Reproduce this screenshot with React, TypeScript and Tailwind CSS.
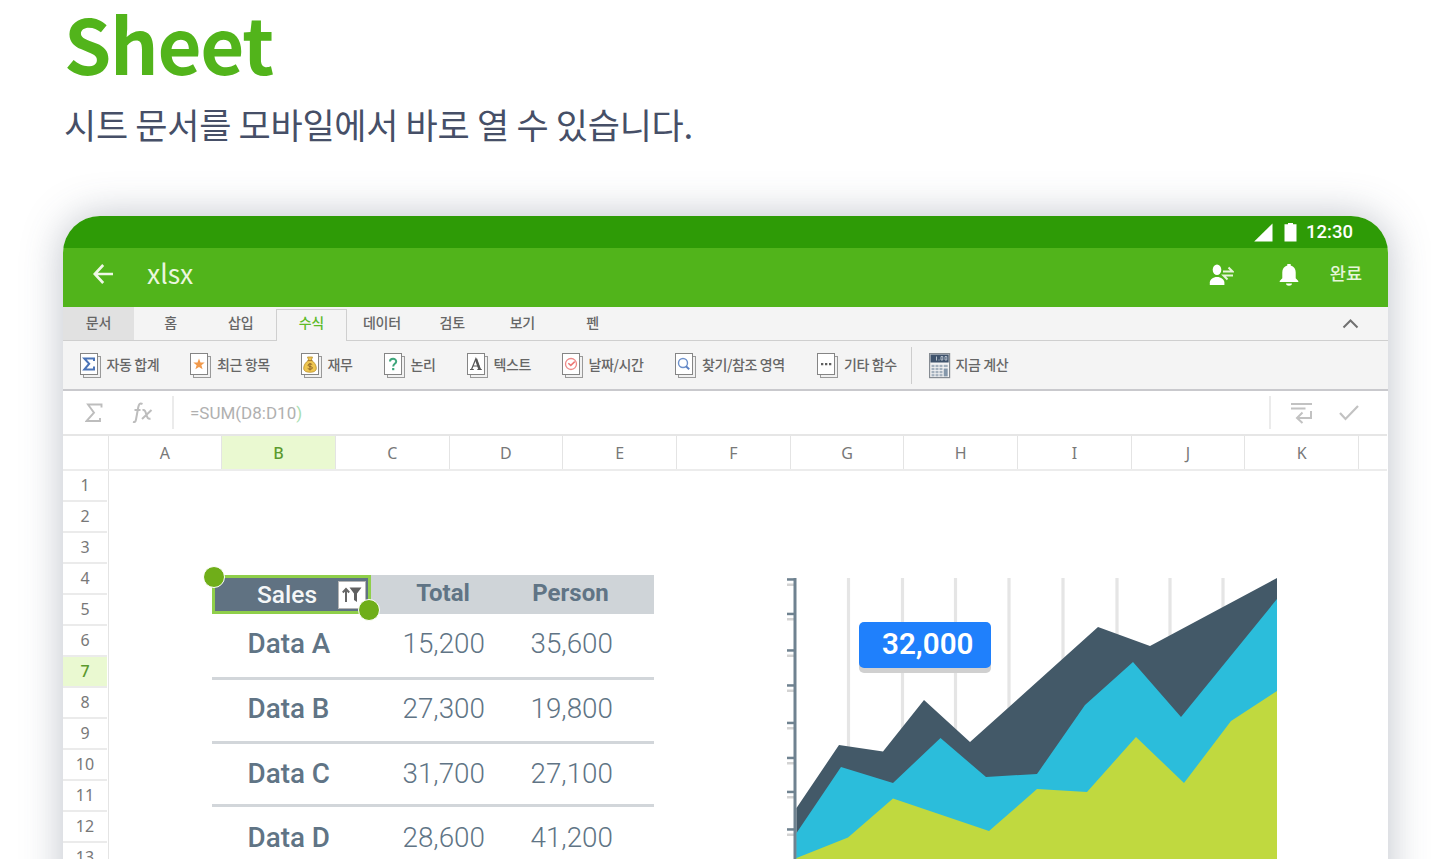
import type { ReactNode } from "react";

const KR = "font-['Noto_Sans_CJK_KR',sans-serif]";

const tabs = ["홈", "삽입", "수식", "데이터", "검토", "보기", "펜"];
const columns = ["A", "B", "C", "D", "E", "F", "G", "H", "I", "J", "K"];
const rowNumbers = Array.from({ length: 13 }, (_, i) => i + 1);

const records = [
  { name: "Data A", total: "15,200", person: "35,600", box: "h-[66px] pt-[14px]" },
  { name: "Data B", total: "27,300", person: "19,800", box: "h-[63.5px] pt-[12.5px]" },
  { name: "Data C", total: "31,700", person: "27,100", box: "h-[63.5px] pt-[14px]" },
  { name: "Data D", total: "28,600", person: "41,200", box: "h-[63.5px] pt-[15px]" },
];

function Page({ children }: { children?: ReactNode }) {
  return (
    <svg width="22" height="26" viewBox="0 0 22 26" className="shrink-0">
      <rect x="3.5" y="3.5" width="17" height="21" fill="#f1f1f1" stroke="#999" />
      <rect x="0.5" y="0.5" width="17" height="21" fill="#fff" stroke="#858585" />
      {children}
    </svg>
  );
}

const tools: { label: string; width: string; icon: ReactNode }[] = [
  {
    label: "자동 합계",
    width: "w-[110.5px]",
    icon: (
      <Page>
        <path d="M14 8V5.500H4.300l4.900 5.200L4.300 16.500H14v-3" fill="none" stroke="#4b74b8" strokeWidth="2" />
      </Page>
    ),
  },
  {
    label: "최근 항목",
    width: "w-[110.5px]",
    icon: (
      <Page>
        <path d="M9 5.500l1.500 4 4.200.1-3.300 2.600 1.200 4.100L9 13.900l-3.600 2.400 1.200-4.100-3.300-2.600 4.200-.1z" fill="#f19a4c" />
      </Page>
    ),
  },
  {
    label: "재무",
    width: "w-[83px]",
    icon: (
      <Page>
        <path d="M6.500 4l5 0-1.200 3.200c3 1.800 5 5 5 8 0 2.600-2 4-6.300 4s-6.300-1.400-6.300-4c0-3 2-6.200 5-8z" fill="#efc64f" stroke="#b98e2c" strokeWidth="0.8" />
        <path d="M6.600 7.600h4.800" stroke="#a4762a" strokeWidth="1" />
        <path d="M11.200 11.600c-.7-.9-4.200-1.100-4.200.6 0 1.800 4.400.8 4.400 2.700 0 1.800-3.700 1.600-4.700.5M9 10v7.500" fill="none" stroke="#8d6428" strokeWidth="1" />
      </Page>
    ),
  },
  {
    label: "논리",
    width: "w-[83px]",
    icon: (
      <Page>
        <path d="M6 8.500C6 5 12.200 5 12.200 8.400c0 2.400-3 2.500-3 5" fill="none" stroke="#3ea67b" strokeWidth="2" />
        <rect x="8.100" y="15" width="2.200" height="2.200" fill="#3ea67b" />
      </Page>
    ),
  },
  {
    label: "텍스트",
    width: "w-[95px]",
    icon: (
      <Page>
        <path d="M4.500 16.500L8.900 5.500l4.400 11M6 13h5.500M3 16.500h3.800M10.300 16.500h4.500" fill="none" stroke="#555" strokeWidth="1.200" />
        <path d="M9 6l3.600 10.400" stroke="#555" strokeWidth="2.400" />
      </Page>
    ),
  },
  {
    label: "날짜/시간",
    width: "w-[113.5px]",
    icon: (
      <Page>
        <circle cx="9" cy="11" r="5.500" fill="none" stroke="#ee8a88" strokeWidth="1.300" />
        <path d="M6.300 10.200l2.500 2.200 4-3.800" fill="none" stroke="#ee7775" strokeWidth="1.500" />
      </Page>
    ),
  },
  {
    label: "찾기/참조 영역",
    width: "w-[142px]",
    icon: (
      <Page>
        <circle cx="8" cy="10" r="4.500" fill="none" stroke="#6d91cb" strokeWidth="1.400" />
        <path d="M11 13.200l3.200 3" stroke="#5b82c4" strokeWidth="2" />
      </Page>
    ),
  },
  {
    label: "기타 함수",
    width: "w-[94px]",
    icon: (
      <Page>
        <path d="M4 10h2.300v2.300H4zM8 10h2.300v2.300H8zM12 10h2.300v2.300H12z" fill="#5f5f5f" />
      </Page>
    ),
  },
];

function CalculatorIcon() {
  return (
    <svg width="22" height="26" viewBox="0 0 22 26" className="shrink-0">
      <rect x="0.600" y="0.600" width="20" height="24" fill="#f4f4f4" stroke="#858b92" strokeWidth="1.200" />
      <rect x="1.500" y="1.500" width="18.200" height="8" fill="#3f536c" />
      <path d="M7.500 3.500v4M10 6.500v1M12 3.500h1.800v3.500H12zM16 3.500h1.800v3.500H16z" fill="none" stroke="#c3ccd6" strokeWidth="0.900" />
      {[11.800, 14.900, 18, 21.100].map((y) =>
        [2.500, 6.500, 10.500].map((x) => <rect key={`${x}-${y}`} x={x} y={y} width="3" height="2.300" fill="#a3b0bd" />)
      )}
      <rect x="14.700" y="11.800" width="4" height="2.300" fill="#a3b0bd" />
      <rect x="14.700" y="15.500" width="4" height="7.900" fill="#8598ab" />
    </svg>
  );
}

function StatusBar() {
  return (
    <div className="flex h-8 items-center justify-end bg-[#2e9b06] pr-[35px]">
      <svg width="19" height="19" viewBox="0 0 19 19" className="mr-[11px]">
        <path d="M18.500 0.500v18H0.200z" fill="#fff" />
      </svg>
      <svg width="13" height="19" viewBox="0 0 13 19" className="mr-[9px]">
        <path d="M4 0h5v1.300h3.500v17.200H0.500V1.300H4z" fill="#fff" />
      </svg>
      <span className="font-[Roboto,sans-serif] text-[18.5px] leading-8 font-medium text-white">12:30</span>
    </div>
  );
}

function TitleBar() {
  return (
    <div className="flex h-[59px] items-center bg-[#51b41b] pr-[26px] pl-[30px]">
      <svg width="20" height="20" viewBox="0 0 20 20" className="-mt-[7px]">
        <path d="M10.200 1L1.800 10l8.400 9M2 10h18" fill="none" stroke="#eef7e6" strokeWidth="2.700" />
      </svg>
      <span className={`${KR} -mt-[9px] ml-[34px] text-[26.5px] leading-[40px] text-[#eaf6df]`}>xlsx</span>
      <div className="-mt-[6px] ml-auto flex items-center">
        <svg width="25" height="22" viewBox="0 0 25 22">
          <ellipse cx="8" cy="5.800" rx="4.300" ry="5.300" fill="#fff" />
          <path d="M.8 21v-2.500c0-3 3.200-5.500 7.200-5.500s7.400 2.500 7.400 5.500V21z" fill="#fff" />
          <path d="M14 7.500h9.500L19.500 3.500M24 11.500h-9.500l4 4" fill="none" stroke="#e6f4da" strokeWidth="2" />
        </svg>
        <svg width="20" height="24" viewBox="0 0 20 24" className="ml-[45px]">
          <path d="M8.300 2.500V1h3.400v1.500c3.300.8 5 3.500 5 6.800v6l2.600 2.600v1H.7v-1l2.600-2.600v-6c0-3.300 1.700-6 5-6.800zM7 20.500h6c0 3-6 3-6 0z" fill="#fff" />
        </svg>
        <span className={`${KR} -mt-[3px] ml-[31px] text-[17.5px] leading-6 font-medium text-[#e6f5d9]`}>완료</span>
      </div>
    </div>
  );
}

function TabBar() {
  return (
    <div className={`${KR} flex h-[34px] text-[14px] leading-[30px] font-medium tracking-[-0.2px] text-[#666]`}>
      <div className="w-[71px] border-b border-[#cfcfcf] bg-[#e1e1e1] text-center">문서</div>
      <div className="w-[1.5px] border-b border-[#cfcfcf]" />
      {tabs.map((tab) =>
        tab === "수식" ? (
          <div key={tab} className="mt-[2px] w-[71px] border-x border-t border-[#cfcfcf] text-center leading-[25px] text-[#5dba28]">
            {tab}
          </div>
        ) : (
          <div key={tab} className="w-[70.2px] border-b border-[#cfcfcf] text-center">
            {tab}
          </div>
        )
      )}
      <div className="flex flex-1 items-center justify-end border-b border-[#cfcfcf] pr-[29px]">
        <svg width="17" height="11" viewBox="0 0 17 11">
          <path d="M1.500 9.500l7-7 7 7" fill="none" stroke="#707070" strokeWidth="2" />
        </svg>
      </div>
    </div>
  );
}

function ToolBar() {
  return (
    <div className={`${KR} flex h-[50px] items-center border-b-2 border-[#c9c9cd] pt-px pl-[16.5px] text-[14px] font-medium tracking-[-0.4px] text-[#666]`}>
      {tools.map((tool) => (
        <div key={tool.label} className={`${tool.width} flex items-center gap-[5px] whitespace-nowrap`}>
          {tool.icon}
          <span className="-mt-[3px] leading-6">{tool.label}</span>
        </div>
      ))}
      <div className="mr-[16.5px] h-[37px] w-px bg-[#cdcdcd]" />
      <div className="flex items-center gap-[5px]">
        <CalculatorIcon />
        <span className="-mt-[3px] leading-6">지금 계산</span>
      </div>
    </div>
  );
}

function FormulaBar() {
  return (
    <div className="flex h-[45px] items-center border-b-2 border-[#e6e6e6] pr-[28px] pl-[22px]">
      <svg width="18" height="20" viewBox="0 0 18 20">
        <path d="M16.500 4.500V1.500H3l6 8.200L1.500 18H15v-3" fill="none" stroke="#bdbdbd" strokeWidth="1.900" />
      </svg>
      <svg width="21" height="22" viewBox="0 0 21 22" className="ml-[29px]">
        <path d="M10.500 2C7.800.6 6.800 2.500 6.300 5L4 17.500c-.4 2-1.200 3-3 2.400M2.500 8h6M10.500 8.200c2.500-.8 3 1.500 4 4.800s1.800 4.200 4 3.500M19.500 8L10 17" fill="none" stroke="#bdbdbd" strokeWidth="2" />
      </svg>
      <div className="ml-[19px] h-[33px] w-[2px] bg-[#ebebeb]" />
      <span className="ml-[16px] font-[Roboto,sans-serif] text-[17px] leading-6 text-[#b0b0b0]">
        =SUM(D8:D10<span className="text-[#a8deb0]">)</span>
      </span>
      <div className="mr-[20px] ml-auto h-[33px] w-[2px] bg-[#ebebeb]" />
      <svg width="22" height="22" viewBox="0 0 22 22">
        <path d="M0 2h21M0 6.500h14.500M20 9v7H6M11.500 10.500L6 16l5.500 5" fill="none" stroke="#c2c2c2" strokeWidth="2" />
      </svg>
      <svg width="20" height="16" viewBox="0 0 20 16" className="ml-[26px]">
        <path d="M1 8l5.500 6L19 1" fill="none" stroke="#c2c2c2" strokeWidth="2.200" />
      </svg>
    </div>
  );
}

function ColumnHeader() {
  return (
    <div className="flex h-[35px] border-b-2 border-[#ececec] text-center font-['Noto_Sans',sans-serif] text-[16px] leading-[35px] text-[#787878]">
      <div className="w-[45.5px] shrink-0 border-r border-[#e4e4e4]" />
      {columns.map((column) => (
        <div
          key={column}
          className={
            column === "B"
              ? "w-[113.7px] shrink-0 border-r border-[#e4e4e4] bg-[#eaf9d1] font-medium text-[#5b9a2e]"
              : "w-[113.7px] shrink-0 border-r border-[#e4e4e4]"
          }
        >
          {column}
        </div>
      ))}
    </div>
  );
}

function SalesTable() {
  return (
    <div className="mt-[104px] ml-[103px] w-[442px] shrink-0 font-[Roboto,sans-serif] text-[#607485]">
      <div className="flex h-[39px] bg-[#cfd4d8]">
        <div className="relative flex w-[159px] items-center border-[3px] border-[#8fcf4a] bg-[#607282] pr-[2px] pl-[42px]">
          <span className="text-[24.5px] leading-[30px] font-medium text-[#f4f6f7]">Sales</span>
          <div className="ml-auto flex h-[28px] w-[28px] items-center justify-center border border-[#b5b5b5] bg-white">
            <svg width="20" height="15" viewBox="0 0 20 15">
              <path d="M4 15V2M0.800 5.500L4 2l3.200 3.500" fill="none" stroke="#666" strokeWidth="2" />
              <path d="M7.500 0.500H19.500L15 6.500V15l-3-2V6.500z" fill="#606060" />
            </svg>
          </div>
          <div className="absolute -top-[12px] -left-[12px] h-[22px] w-[22px] rounded-full border border-white bg-[#6fae19]" />
          <div className="absolute -right-[12px] -bottom-[10px] h-[22px] w-[22px] rounded-full border border-white bg-[#6fae19]" />
        </div>
        <span className="w-[144px] text-center text-[24px] leading-[37px] font-bold">Total</span>
        <span className="w-[111px] text-center text-[24px] leading-[37px] font-bold">Person</span>
      </div>
      {records.map((record) => (
        <div
          key={record.name}
          className={`${record.box} flex border-b-[3px] border-[#d2d6da] text-[27.8px] leading-8 font-light`}
        >
          <span className="w-[190.5px] pl-[35.5px] font-medium">{record.name}</span>
          <span className="w-[128px]">{record.total}</span>
          <span>{record.person}</span>
        </div>
      ))}
    </div>
  );
}

function AreaChart() {
  const gridLines = [61.5, 115.5, 168.5, 222, 276, 330, 383, 436];
  const ticks = [1.5, 36, 72.5, 107.5, 145, 180, 214, 251.5];
  return (
    <div className="relative mt-[107px] ml-[133px] h-[281px] w-[490px] shrink-0">
      <svg width="490" height="281" viewBox="0 0 490 281">
        {gridLines.map((x) => (
          <rect key={x} x={x - 1.6} y="0" width="3.200" height="281" fill="#e5e5e5" />
        ))}
        {ticks.map((y) => (
          <g key={y}>
            <rect x="0" y={y + 4} width="8" height="2.500" fill="#d3d3d3" />
            <rect x="0" y={y - 1.3} width="8" height="2.500" fill="#6f8290" />
          </g>
        ))}
        <rect x="6.500" y="0" width="3" height="281" fill="#6f8290" />
        <path d="M9.500 230L52 167l44 6.500 41-51.500 46 42L311 49l52 19L490 0v281H9.500z" fill="#435968" />
        <path d="M9.500 255L54 189l52 16 47.500-45L199 199l51-3 48-69 48-43 48 55L490 21v260H9.500z" fill="#2bbddb" />
        <path d="M9.500 280L61 259.500l45-39 96 32.500 48-42 50 3 49-55 48 46 47-62 46-30v168H9.500z" fill="#c0d93f" />
      </svg>
      <div className="absolute top-[43.5px] left-[72px] h-[46px] w-[132px] rounded-[5px] bg-[#1f80fc] pl-[23px] font-[Roboto,sans-serif] text-[29.6px] leading-[44px] font-semibold text-white shadow-[0_5px_0_#d0d0d0]">
        32,000
      </div>
    </div>
  );
}

export default function App() {
  return (
    <main className="flex h-[859px] w-[1431px] flex-col overflow-hidden bg-white">
      <header className={`${KR} h-[216px] shrink-0 pl-[63px]`}>
        <h1 className="pt-[2px] pl-px text-[76px] leading-[80px] font-bold tracking-[-1.3px] text-[#52b41b]">Sheet</h1>
        <p className="mt-[16px] pl-px text-[35px] leading-[52px] tracking-[-0.3px] text-[#464f67]">
          시트 문서를 모바일에서 바로 열 수 있습니다.
        </p>
      </header>
      <section className="ml-[63px] w-[1325px] rounded-t-[37px] shadow-[0_0_40px_rgba(70,79,103,0.35)]">
        <div className="overflow-hidden rounded-t-[37px]">
          <StatusBar />
          <TitleBar />
          <div className="bg-[#f4f4f4]">
            <TabBar />
            <ToolBar />
          </div>
          <div className="mr-px overflow-hidden bg-white">
            <FormulaBar />
            <ColumnHeader />
            <div className="flex h-[500px]">
              <div className="w-[46px] shrink-0 border-r border-[#e4e4e4] pr-px text-center font-['Noto_Sans',sans-serif] text-[16px] leading-[29px] text-[#787878]">
                {rowNumbers.map((n) => (
                  <div
                    key={n}
                    className={
                      n === 7
                        ? "h-[31px] border-b-2 border-[#ebebeb] bg-[#eaf9d1] font-medium text-[#5b9a2e]"
                        : "h-[31px] border-b-2 border-[#ebebeb]"
                    }
                  >
                    {n}
                  </div>
                ))}
              </div>
              <SalesTable />
              <AreaChart />
            </div>
          </div>
        </div>
      </section>
    </main>
  );
}
